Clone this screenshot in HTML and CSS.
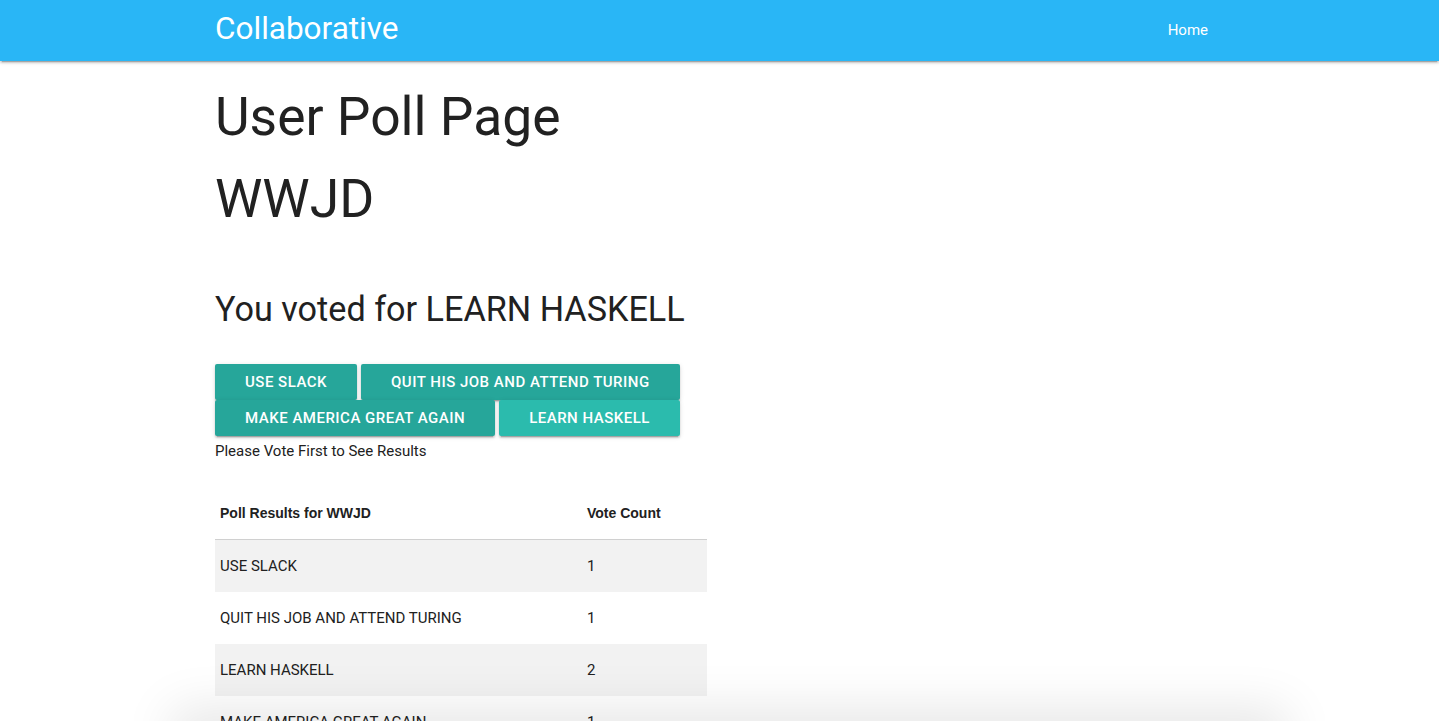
FILE: index.html
```html
<!DOCTYPE html>
<html lang="en">
<head>
<meta charset="utf-8">
<title>User Poll Page</title>
<link rel="stylesheet" href="styles.css">
</head>
<body>
<nav class="nav">
  <div class="container nav-inner">
    <a class="brand" href="#">Collaborative</a>
    <ul class="nav-links">
      <li><a href="#">Home</a></li>
    </ul>
  </div>
</nav>
<main class="container">
  <h2 class="title">User Poll Page</h2>
  <h2 class="poll-name">WWJD</h2>
  <h4 class="voted">You voted for LEARN HASKELL</h4>
  <div class="options">
    <button class="btn">USE SLACK</button>
    <button class="btn">QUIT HIS JOB AND ATTEND TURING</button>
    <button class="btn">MAKE AMERICA GREAT AGAIN</button>
    <button class="btn btn-active">LEARN HASKELL</button>
  </div>
  <p class="note">Please Vote First to See Results</p>
  <table class="results">
    <thead>
      <tr><th class="c1">Poll Results for WWJD</th><th>Vote Count</th></tr>
    </thead>
    <tbody>
      <tr><td>USE SLACK</td><td>1</td></tr>
      <tr><td>QUIT HIS JOB AND ATTEND TURING</td><td>1</td></tr>
      <tr><td>LEARN HASKELL</td><td>2</td></tr>
      <tr><td>MAKE AMERICA GREAT AGAIN</td><td>1</td></tr>
    </tbody>
  </table>
</main>
<div class="sheet-shadow"></div>
</body>
</html>
```
FILE: styles.css
```css
html, body {
  margin: 0;
  padding: 0;
}
body {
  font-family: Roboto, "Liberation Sans", sans-serif;
  color: rgba(0, 0, 0, 0.87);
  background: #fff;
  font-size: 15px;
}
.container {
  width: 1009px;
  margin: 0 auto;
}
.nav {
  background: #29b6f6;
  height: 61px;
  box-shadow: 0 2px 2px 0 rgba(0,0,0,0.14), 0 1px 5px 0 rgba(0,0,0,0.12), 0 3px 1px -2px rgba(0,0,0,0.2);
}
.nav-inner {
  display: flex;
  align-items: center;
  justify-content: space-between;
  height: 61px;
}
.brand {
  color: #fff;
  text-decoration: none;
  font-size: 31.5px;
  line-height: 56px;
  margin-top: -3px;
}
.nav-links {
  list-style: none;
  margin: 0;
  padding: 0;
  display: flex;
}
.nav-links a {
  display: block;
  color: #fff;
  text-decoration: none;
  font-size: 15px;
  padding: 0 15px 0 15px;
  margin-right: 1px;
  line-height: 56px;
  margin-top: -2px;
}
.title, .poll-name {
  font-weight: 400;
  font-size: 53.4px;
  line-height: 58px;
  margin: 0;
  color: #212121;
}
.title {
  padding-top: 27px;
}
.poll-name {
  margin-top: 24px;
}
.voted {
  font-weight: 400;
  font-size: 34.2px;
  line-height: 37px;
  margin: 63px 0 0;
  color: #212121;
}
.options {
  width: 492px;
  margin-top: 36px;
  display: flex;
  flex-wrap: wrap;
  column-gap: 4px;
  row-gap: 0;
}
.btn {
  border: none;
  border-radius: 2px;
  background: #26a69a;
  color: #fff;
  font-family: Roboto, sans-serif;
  font-weight: 500;
  font-size: 15px;
  letter-spacing: 0.5px;
  height: 36px;
  line-height: 36px;
  padding: 0 30px;
  box-shadow: 0 2px 2px 0 rgba(0,0,0,0.14), 0 1px 5px 0 rgba(0,0,0,0.12), 0 3px 1px -2px rgba(0,0,0,0.2);
  cursor: pointer;
}
.btn-active {
  background: #2bbbad;
}
.note {
  margin: 6px 0 0;
  font-size: 15px;
  line-height: 18px;
  color: #212121;
}
.results {
  width: 492px;
  border-collapse: collapse;
  margin-top: 27px;
}
.results th {
  font-family: "Liberation Sans", Arial, sans-serif;
  font-weight: 700;
  font-size: 14px;
  text-align: left;
  padding: 0 5px;
  height: 52px;
  color: #212121;
  border-bottom: 1px solid #d0d0d0;
}
.results th.c1 {
  width: 357px;
}
.results td {
  font-size: 15px;
  padding: 0 5px;
  height: 52px;
  color: #212121;
}
.results tbody tr:nth-child(odd) {
  background: #f2f2f2;
}
.sheet-shadow {
  position: fixed;
  left: 180px;
  right: 160px;
  top: 721px;
  height: 40px;
  box-shadow: 0 -4px 50px 8px rgba(0,0,0,0.10);
  background: #fff;
}
```
